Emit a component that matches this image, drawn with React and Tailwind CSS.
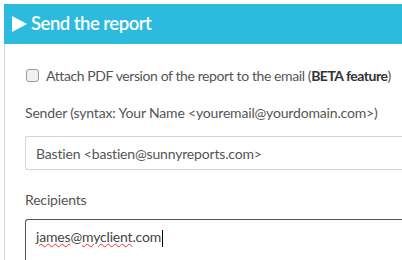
export default function App() {
  return (
    <div className="w-[402px] h-[260px] overflow-hidden bg-white pt-1 pl-1" style={{ fontFamily: 'Lato, "Open Sans", sans-serif' }}>
      <div className="h-full border-l border-[#d6d6d6]">
        {/* header */}
        <div className="h-10 bg-[#2cbbdf] flex items-center pl-[8px] text-white -ml-px">
          <svg width="15" height="16" viewBox="0 0 15 16" className="mr-[4px]">
            <path d="M0 0 L15 8 L0 16 Z" fill="white" />
          </svg>
          <span className="text-[18.5px] font-semibold tracking-[-0.5px]">Send the report</span>
        </div>

        <div className="pl-5 pt-[23px] text-[#555] text-[14px] tracking-[-0.17px] whitespace-nowrap">
          <label className="flex items-center gap-[7px] h-[16px]">
            <span className="w-[13px] h-[13px] rounded-[3px] border border-[#9a9a9a] bg-[#f0f0f0] shrink-0 ml-px" />
            <span className="tracking-[-0.4px]">Attach PDF version of the report to the email (<b className="text-[#333] tracking-[-0.5px]">BETA feature</b>)</span>
          </label>

          <div className="mt-[20px] leading-5">Sender (syntax: Your Name &lt;youremail@yourdomain.com&gt;)</div>
          <div className="mt-[13px] h-[34px] border border-[#d4d4d4] rounded-l-[3px] border-r-0 flex items-center pl-[10px] text-[#555]">
            Bastien &lt;bastien@sunnyreports.com&gt;
          </div>

          <div className="mt-[20px] leading-5">Recipients</div>
          <div className="mt-[9px] h-[60px] border border-[#555] border-r-0 rounded-tl-[3px] pl-[10px] pt-[6px] text-[#444]">
            <span className="underline decoration-wavy decoration-red-500 decoration-1">james</span>@<span className="underline decoration-wavy decoration-red-500 decoration-1">myclient</span>.com<span className="inline-block w-px h-[17px] bg-black align-middle ml-px" />
          </div>
        </div>
      </div>
    </div>
  );
}
